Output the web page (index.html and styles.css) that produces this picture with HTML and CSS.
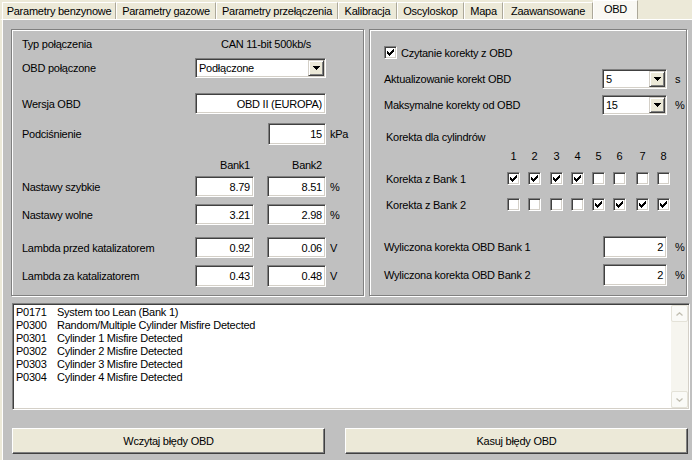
FILE: index.html
```html
<!DOCTYPE html>
<html>
<head>
<meta charset="utf-8">
<link rel="stylesheet" href="styles.css">
</head>
<body>
<div class="tabs">
  <div class="tab">Parametry benzynowe</div>
  <div class="tab">Parametry gazowe</div>
  <div class="tab">Parametry przełączenia</div>
  <div class="tab">Kalibracja</div>
  <div class="tab">Oscyloskop</div>
  <div class="tab">Mapa</div>
  <div class="tab">Zaawansowane</div>
  <div class="tab active">OBD</div>
</div>
<div class="page">
  <div class="panels">
    <div class="group left">
      <div class="row l1"><span class="lbl">Typ połączenia</span><span class="val">CAN 11-bit 500kb/s</span></div>
      <div class="row l2"><span class="lbl">OBD połączone</span>
        <div class="combo wide"><span class="ctext">Podłączone</span><span class="dd"><svg width="7" height="4" viewBox="0 0 7 4"><path d="M0 0h7v1h-7zM1 1h5v1h-5zM2 2h3v1h-3zM3 3h1v1h-1z" fill="#000"/></svg></span></div>
      </div>
      <div class="row l3"><span class="lbl">Wersja OBD</span><div class="field wide">OBD II (EUROPA)</div></div>
      <div class="row l4"><span class="lbl">Podciśnienie</span><div class="field small">15</div><span class="unit">kPa</span></div>
      <div class="row l5"><span class="lbl"></span><span class="head">Bank1</span><span class="head second">Bank2</span></div>
      <div class="row l6"><span class="lbl">Nastawy szybkie</span><div class="field num">8.79</div><div class="field num second">8.51</div><span class="unit">%</span></div>
      <div class="row l7"><span class="lbl">Nastawy wolne</span><div class="field num">3.21</div><div class="field num second">2.98</div><span class="unit">%</span></div>
      <div class="row l8"><span class="lbl">Lambda przed katalizatorem</span><div class="field num">0.92</div><div class="field num second">0.06</div><span class="unit">V</span></div>
      <div class="row l9"><span class="lbl">Lambda za katalizatorem</span><div class="field num">0.43</div><div class="field num second">0.48</div><span class="unit">V</span></div>
    </div>
    <div class="group right">
      <div class="row c1"><span class="cb"><svg width="11" height="11" viewBox="1 1 11 11"><path d="M9 3h1v1h-1zM8 4h2v1h-2zM3 5h1v1h-1zM7 5h3v1h-3zM3 6h2v1h-2zM6 6h3v1h-3zM3 7h5v1h-5zM4 8h3v1h-3zM5 9h1v1h-1z" fill="#000"/></svg></span><span class="cbtext">Czytanie korekty z OBD</span></div>
      <div class="row c2"><span class="lbl">Aktualizowanie korekt OBD</span>
        <div class="combo narrow"><span class="ctext">5</span><span class="dd"><svg width="7" height="4" viewBox="0 0 7 4"><path d="M0 0h7v1h-7zM1 1h5v1h-5zM2 2h3v1h-3zM3 3h1v1h-1z" fill="#000"/></svg></span></div><span class="unit">s</span>
      </div>
      <div class="row c3"><span class="lbl">Maksymalne korekty od OBD</span>
        <div class="combo narrow"><span class="ctext">15</span><span class="dd"><svg width="7" height="4" viewBox="0 0 7 4"><path d="M0 0h7v1h-7zM1 1h5v1h-5zM2 2h3v1h-3zM3 3h1v1h-1z" fill="#000"/></svg></span></div><span class="unit">%</span>
      </div>
      <div class="row c4">Korekta dla cylindrów</div>
      <div class="row cyl c5"><span class="lbl"></span>
        <span class="cell"><span class="n">1</span></span><span class="cell"><span class="n">2</span></span><span class="cell"><span class="n">3</span></span><span class="cell"><span class="n">4</span></span><span class="cell"><span class="n">5</span></span><span class="cell"><span class="n">6</span></span><span class="cell"><span class="n">7</span></span><span class="cell"><span class="n">8</span></span>
      </div>
      <div class="row cyl c6"><span class="lbl">Korekta z Bank 1</span>
        <span class="cell"><span class="cb"><svg width="11" height="11" viewBox="1 1 11 11"><path d="M9 3h1v1h-1zM8 4h2v1h-2zM3 5h1v1h-1zM7 5h3v1h-3zM3 6h2v1h-2zM6 6h3v1h-3zM3 7h5v1h-5zM4 8h3v1h-3zM5 9h1v1h-1z" fill="#000"/></svg></span></span>
        <span class="cell"><span class="cb"><svg width="11" height="11" viewBox="1 1 11 11"><path d="M9 3h1v1h-1zM8 4h2v1h-2zM3 5h1v1h-1zM7 5h3v1h-3zM3 6h2v1h-2zM6 6h3v1h-3zM3 7h5v1h-5zM4 8h3v1h-3zM5 9h1v1h-1z" fill="#000"/></svg></span></span>
        <span class="cell"><span class="cb"><svg width="11" height="11" viewBox="1 1 11 11"><path d="M9 3h1v1h-1zM8 4h2v1h-2zM3 5h1v1h-1zM7 5h3v1h-3zM3 6h2v1h-2zM6 6h3v1h-3zM3 7h5v1h-5zM4 8h3v1h-3zM5 9h1v1h-1z" fill="#000"/></svg></span></span>
        <span class="cell"><span class="cb"><svg width="11" height="11" viewBox="1 1 11 11"><path d="M9 3h1v1h-1zM8 4h2v1h-2zM3 5h1v1h-1zM7 5h3v1h-3zM3 6h2v1h-2zM6 6h3v1h-3zM3 7h5v1h-5zM4 8h3v1h-3zM5 9h1v1h-1z" fill="#000"/></svg></span></span>
        <span class="cell"><span class="cb"></span></span>
        <span class="cell"><span class="cb"></span></span>
        <span class="cell"><span class="cb"></span></span>
        <span class="cell"><span class="cb"></span></span>
      </div>
      <div class="row cyl c7"><span class="lbl">Korekta z Bank 2</span>
        <span class="cell"><span class="cb"></span></span>
        <span class="cell"><span class="cb"></span></span>
        <span class="cell"><span class="cb"></span></span>
        <span class="cell"><span class="cb"></span></span>
        <span class="cell"><span class="cb"><svg width="11" height="11" viewBox="1 1 11 11"><path d="M9 3h1v1h-1zM8 4h2v1h-2zM3 5h1v1h-1zM7 5h3v1h-3zM3 6h2v1h-2zM6 6h3v1h-3zM3 7h5v1h-5zM4 8h3v1h-3zM5 9h1v1h-1z" fill="#000"/></svg></span></span>
        <span class="cell"><span class="cb"><svg width="11" height="11" viewBox="1 1 11 11"><path d="M9 3h1v1h-1zM8 4h2v1h-2zM3 5h1v1h-1zM7 5h3v1h-3zM3 6h2v1h-2zM6 6h3v1h-3zM3 7h5v1h-5zM4 8h3v1h-3zM5 9h1v1h-1z" fill="#000"/></svg></span></span>
        <span class="cell"><span class="cb"><svg width="11" height="11" viewBox="1 1 11 11"><path d="M9 3h1v1h-1zM8 4h2v1h-2zM3 5h1v1h-1zM7 5h3v1h-3zM3 6h2v1h-2zM6 6h3v1h-3zM3 7h5v1h-5zM4 8h3v1h-3zM5 9h1v1h-1z" fill="#000"/></svg></span></span>
        <span class="cell"><span class="cb"><svg width="11" height="11" viewBox="1 1 11 11"><path d="M9 3h1v1h-1zM8 4h2v1h-2zM3 5h1v1h-1zM7 5h3v1h-3zM3 6h2v1h-2zM6 6h3v1h-3zM3 7h5v1h-5zM4 8h3v1h-3zM5 9h1v1h-1z" fill="#000"/></svg></span></span>
      </div>
      <div class="row c8"><span class="lbl">Wyliczona korekta OBD Bank 1</span><div class="field calc">2</div><span class="unit">%</span></div>
      <div class="row c9"><span class="lbl">Wyliczona korekta OBD Bank 2</span><div class="field calc">2</div><span class="unit">%</span></div>
    </div>
  </div>
  <div class="list">
    <div class="items">
      <div class="item"><span class="code">P0171</span><span>System too Lean (Bank 1)</span></div>
      <div class="item"><span class="code">P0300</span><span>Random/Multiple Cylinder Misfire Detected</span></div>
      <div class="item"><span class="code">P0301</span><span>Cylinder 1 Misfire Detected</span></div>
      <div class="item"><span class="code">P0302</span><span>Cylinder 2 Misfire Detected</span></div>
      <div class="item"><span class="code">P0303</span><span>Cylinder 3 Misfire Detected</span></div>
      <div class="item"><span class="code">P0304</span><span>Cylinder 4 Misfire Detected</span></div>
    </div>
    <div class="scroll">
      <div class="sbtn"><svg width="7" height="4" viewBox="0 0 7 4"><path d="M0.5 3.5L3.5 0.8L6.5 3.5" fill="none" stroke="#C2BFB2" stroke-width="1.3"/></svg></div>
      <div class="sbtn"><svg width="7" height="4" viewBox="0 0 7 4"><path d="M0.5 0.5L3.5 3.2L6.5 0.5" fill="none" stroke="#C2BFB2" stroke-width="1.3"/></svg></div>
    </div>
  </div>
  <div class="btns">
    <div class="btn load">Wczytaj błędy OBD</div>
    <div class="btn clear">Kasuj błędy OBD</div>
  </div>
</div>
</body>
</html>
```
FILE: styles.css
```css
* { box-sizing: border-box; }
body {
  margin: 0;
  width: 692px;
  height: 460px;
  overflow: hidden;
  background: #ECE9D8;
  font-family: "Liberation Sans", Arial, sans-serif;
  font-size: 11px;
  letter-spacing: -0.25px;
  color: #000;
}
.tabs {
  display: flex;
  align-items: flex-end;
  height: 19px;
  padding-left: 2px;
}
.tab {
  height: 17px;
  line-height: 16px;
  text-align: center;
  white-space: nowrap;
  background: #ECE9D8;
  border-top: 1px solid #fff;
  border-left: 1px solid #fff;
  border-right: 1px solid #ACA899;
}
.tab:nth-child(1) { width: 114px; }
.tab:nth-child(2) { width: 100px; }
.tab:nth-child(3) { width: 122px; }
.tab:nth-child(4) { width: 59px; }
.tab:nth-child(5) { width: 67px; }
.tab:nth-child(6) { width: 39px; }
.tab:nth-child(7) { width: 90px; }
.tab.active {
  width: 45px;
  height: 19px;
  line-height: 16px;
  background: #F9F8F3;
}
.page {
  height: 441px;
  background: #C0C0C0;
  border-top: 1px solid #fff;
  border-left: 2px solid #ECE9D8;
  box-shadow: inset 1px 0 0 #fff;
  padding: 9px 0 0 9px;
}
.panels {
  display: flex;
  gap: 5px;
  height: 267px;
}
.group {
  height: 267px;
  border: 1px solid #808080;
  box-shadow: inset 1px 1px 0 #fff, 1px 1px 0 #fff;
}
.left { width: 353px; padding-left: 10px; }
.right { width: 318px; padding-left: 14px; }
.row {
  display: flex;
  align-items: center;
  white-space: nowrap;
}
.lbl { flex: none; }
.left .lbl { width: 173px; }
.l1 { margin-top: 6px; height: 16px; }
.l2 { margin-top: 6px; height: 20px; }
.l3 { margin-top: 15px; height: 21px; }
.l4 { margin-top: 9px; height: 22px; }
.l5 { margin-top: 13px; height: 14px; }
.l6 { margin-top: 4px; height: 21px; }
.l7 { margin-top: 7px; height: 21px; }
.l8 { margin-top: 12px; height: 21px; }
.l9 { margin-top: 7px; height: 22px; }
.val { padding-left: 26px; }
.field {
  height: 100%;
  background: #fff;
  border: 1px solid;
  border-color: #808080 #fff #fff #808080;
  box-shadow: inset 1px 1px 0 #404040, inset -1px -1px 0 #D4D0C8;
  display: flex;
  align-items: center;
  justify-content: flex-end;
  padding-right: 3px;
}
.field.wide { width: 131px; }
.field.small { width: 58px; margin-left: 73px; }
.field.num { width: 59px; }
.second { margin-left: 13px; }
.head {
  width: 59px;
  text-align: right;
  padding-right: 4px;
}
.unit { margin-left: 4px; }
.combo {
  height: 100%;
  display: flex;
  background: #fff;
  border: 1px solid;
  border-color: #808080 #fff #fff #808080;
  box-shadow: inset 1px 1px 0 #404040, inset -1px -1px 0 #D4D0C8;
  padding: 1px;
}
.combo.wide { width: 131px; }
.combo.narrow { width: 65px; }
.ctext {
  flex: 1;
  display: flex;
  align-items: center;
  padding-left: 2px;
}
.dd {
  width: 16px;
  background: #ECE9D8;
  border: 1px solid;
  border-color: #D4D0C8 #404040 #404040 #D4D0C8;
  box-shadow: inset 1px 1px 0 #fff, inset -1px -1px 0 #808080;
  display: flex;
  align-items: center;
  justify-content: center;
}
.dd svg { display: block; }
.cb {
  width: 13px;
  height: 13px;
  flex: none;
  display: block;
  background: #fff;
  border: 1px solid;
  border-color: #808080 #fff #fff #808080;
  box-shadow: inset 1px 1px 0 #404040, inset -1px -1px 0 #D4D0C8;
}
.cb svg { display: block; }
.cbtext { margin-left: 4px; }
.c1 { margin-top: 15px; height: 15px; }
.c2 { margin-top: 9px; height: 20px; }
.c3 { margin-top: 6px; height: 20px; }
.c4 { margin-top: 15px; height: 14px; padding-left: 2px; }
.c5 { margin-top: 5px; height: 13px; }
.c6 { margin-top: 9px; height: 15px; }
.c7 { margin-top: 11px; height: 15px; }
.c8 { margin-top: 24px; height: 22px; }
.c9 { margin-top: 6px; height: 22px; }
.right .lbl { width: 218px; }
.right .c8 .lbl, .right .c9 .lbl { width: 219px; }
.right .unit { margin-left: 8px; }
.field.calc { width: 64px; }
.right .cyl .lbl { width: 123px; padding-left: 2px; }
.cell { width: 21px; flex: none; display: flex; }
.cyl .cell:nth-child(3) { width: 22px; }
.cyl .cell:nth-child(7) { width: 23px; }
.cyl .cell:nth-child(9) { width: 13px; }
.n { width: 13px; text-align: center; }
.list {
  margin: 7px 0 0 1px;
  width: 678px;
  height: 107px;
  background: #fff;
  border: 1px solid;
  border-color: #808080 #fff #fff #808080;
  box-shadow: inset 1px 1px 0 #404040, inset -1px -1px 0 #D4D0C8;
  padding: 1px;
  display: flex;
}
.items {
  flex: 1;
  padding: 1px 0 0 2px;
  line-height: 13px;
}
.item { display: flex; white-space: nowrap; }
.code { width: 41px; }
.scroll {
  width: 17px;
  background: #F6F5EF;
  display: flex;
  flex-direction: column;
  justify-content: space-between;
}
.sbtn {
  height: 17px;
  border: 1px solid #E4E2D8;
  border-radius: 2px;
  background: #FAFAF7;
  display: flex;
  align-items: center;
  justify-content: center;
}
.sbtn svg { display: block; }
.btns {
  display: flex;
  gap: 20px;
  margin: 18px 0 0 1px;
}
.btn {
  height: 26px;
  background: #ECE9D8;
  border: 1px solid;
  border-color: #fff #404040 #404040 #fff;
  box-shadow: inset -1px -1px 0 #808080;
  display: flex;
  align-items: center;
  justify-content: center;
}
.btn.load { width: 313px; }
.btn.clear { width: 343px; }
```
